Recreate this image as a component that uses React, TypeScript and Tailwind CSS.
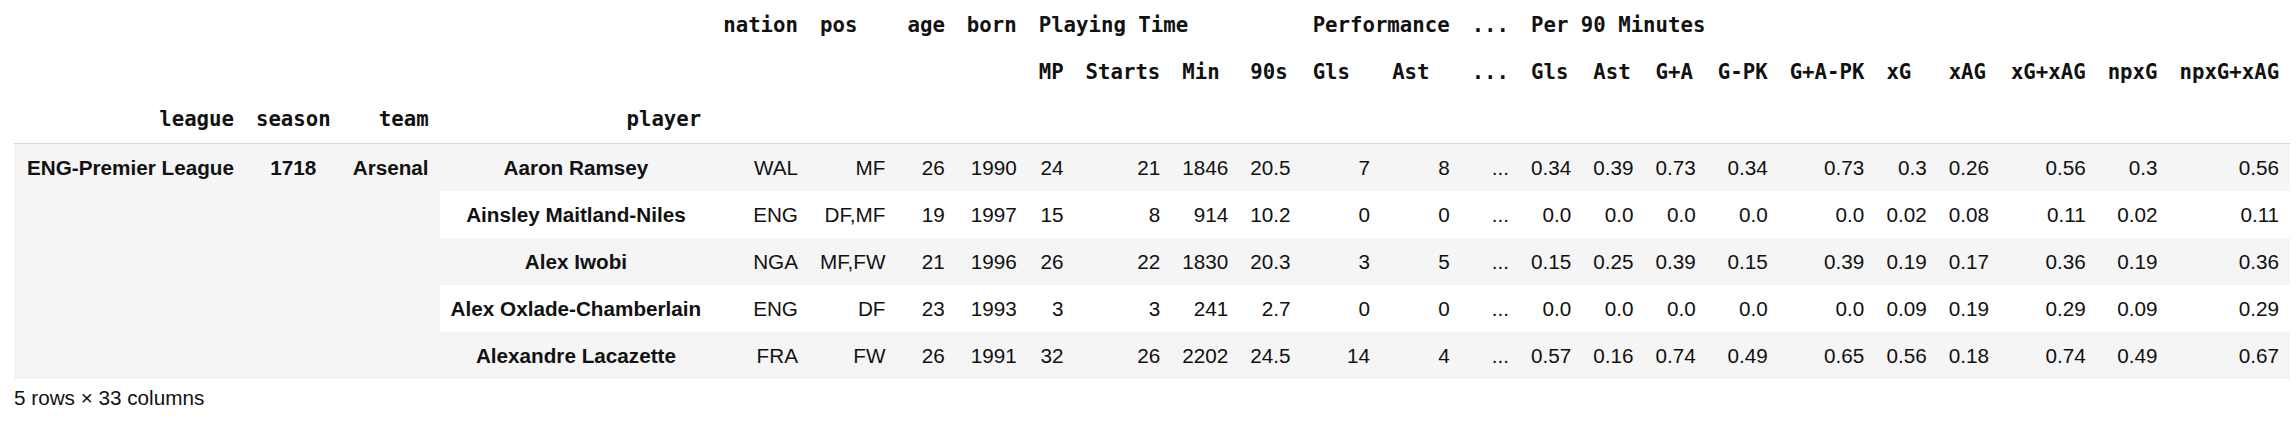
const rows: (string | number)[][] = [
  ['Aaron Ramsey', 'WAL', 'MF', 26, 1990, 24, 21, 1846, '20.5', 7, 8, '0.34', '0.39', '0.73', '0.34', '0.73', '0.3', '0.26', '0.56', '0.3', '0.56'],
  ['Ainsley Maitland-Niles', 'ENG', 'DF,MF', 19, 1997, 15, 8, 914, '10.2', 0, 0, '0.0', '0.0', '0.0', '0.0', '0.0', '0.02', '0.08', '0.11', '0.02', '0.11'],
  ['Alex Iwobi', 'NGA', 'MF,FW', 21, 1996, 26, 22, 1830, '20.3', 3, 5, '0.15', '0.25', '0.39', '0.15', '0.39', '0.19', '0.17', '0.36', '0.19', '0.36'],
  ['Alex Oxlade-Chamberlain', 'ENG', 'DF', 23, 1993, 3, 3, 241, '2.7', 0, 0, '0.0', '0.0', '0.0', '0.0', '0.0', '0.09', '0.19', '0.29', '0.09', '0.29'],
  ['Alexandre Lacazette', 'FRA', 'FW', 26, 1991, 32, 26, 2202, '24.5', 14, 4, '0.57', '0.16', '0.74', '0.49', '0.65', '0.56', '0.18', '0.74', '0.49', '0.67'],
];

const subCols = ['MP', 'Starts', 'Min', '90s', 'Gls', 'Ast', '...', 'Gls', 'Ast', 'G+A', 'G-PK', 'G+A-PK', 'xG', 'xAG', 'xG+xAG', 'npxG', 'npxG+xAG'];

const mono = "font-['DejaVu_Sans_Mono',monospace] font-bold";
const th = `${mono} px-[11px] py-3 text-left whitespace-nowrap`;
const td = 'px-[11px] py-3 text-right whitespace-nowrap font-normal';
const idx = 'px-[11px] py-3 text-center align-top font-bold whitespace-nowrap';

export default function App() {
  return (
    <div className="bg-white text-[#111] font-['Liberation_Sans',Arial,sans-serif] text-[20.7px] leading-[23px] pl-[14px] pt-[2px]">
      <table>
        <thead className="border-b border-[#d8d8d8]">
          <tr>
            <th className={th}></th>
            <th className={th}></th>
            <th className={th}></th>
            <th className={th}></th>
            <th className={th}>nation</th>
            <th className={th}>pos</th>
            <th className={th}>age</th>
            <th className={th}>born</th>
            <th className={th} colSpan={4}>Playing Time</th>
            <th className={th} colSpan={2}>Performance</th>
            <th className={th}>...</th>
            <th className={th} colSpan={10}>Per 90 Minutes</th>
          </tr>
          <tr>
            {Array.from({ length: 8 }).map((_, i) => (
              <th key={i} className={th}></th>
            ))}
            {subCols.map((c, i) => (
              <th key={i} className={th}>{c}</th>
            ))}
          </tr>
          <tr>
            <th className={`${th} !text-right pl-[13px]`}>league</th>
            <th className={`${th} !text-right`}>season</th>
            <th className={`${th} !text-right`}>team</th>
            <th className={`${th} !text-right`}>player</th>
            {Array.from({ length: 21 }).map((_, i) => (
              <th key={i} className={th}></th>
            ))}
          </tr>
        </thead>
        <tbody>
          {rows.map((r, i) => (
            <tr key={i} className={i % 2 === 0 ? 'bg-[#f5f5f5]' : 'bg-white'}>
              {i === 0 && (
                <>
                  <th rowSpan={5} className={`${idx} pl-[13px]`}>ENG-Premier League</th>
                  <th rowSpan={5} className={idx}>1718</th>
                  <th rowSpan={5} className={idx}>Arsenal</th>
                </>
              )}
              <th className={`${idx} align-middle`}>{r[0]}</th>
              {r.slice(1, 11).map((v, j) => (
                <td key={j} className={td}>{v}</td>
              ))}
              <td className={td}>...</td>
              {r.slice(11).map((v, j) => (
                <td key={`p${j}`} className={td}>{v}</td>
              ))}
            </tr>
          ))}
        </tbody>
      </table>
      <p className="mt-[7px]">5 rows × 33 columns</p>
    </div>
  );
}
